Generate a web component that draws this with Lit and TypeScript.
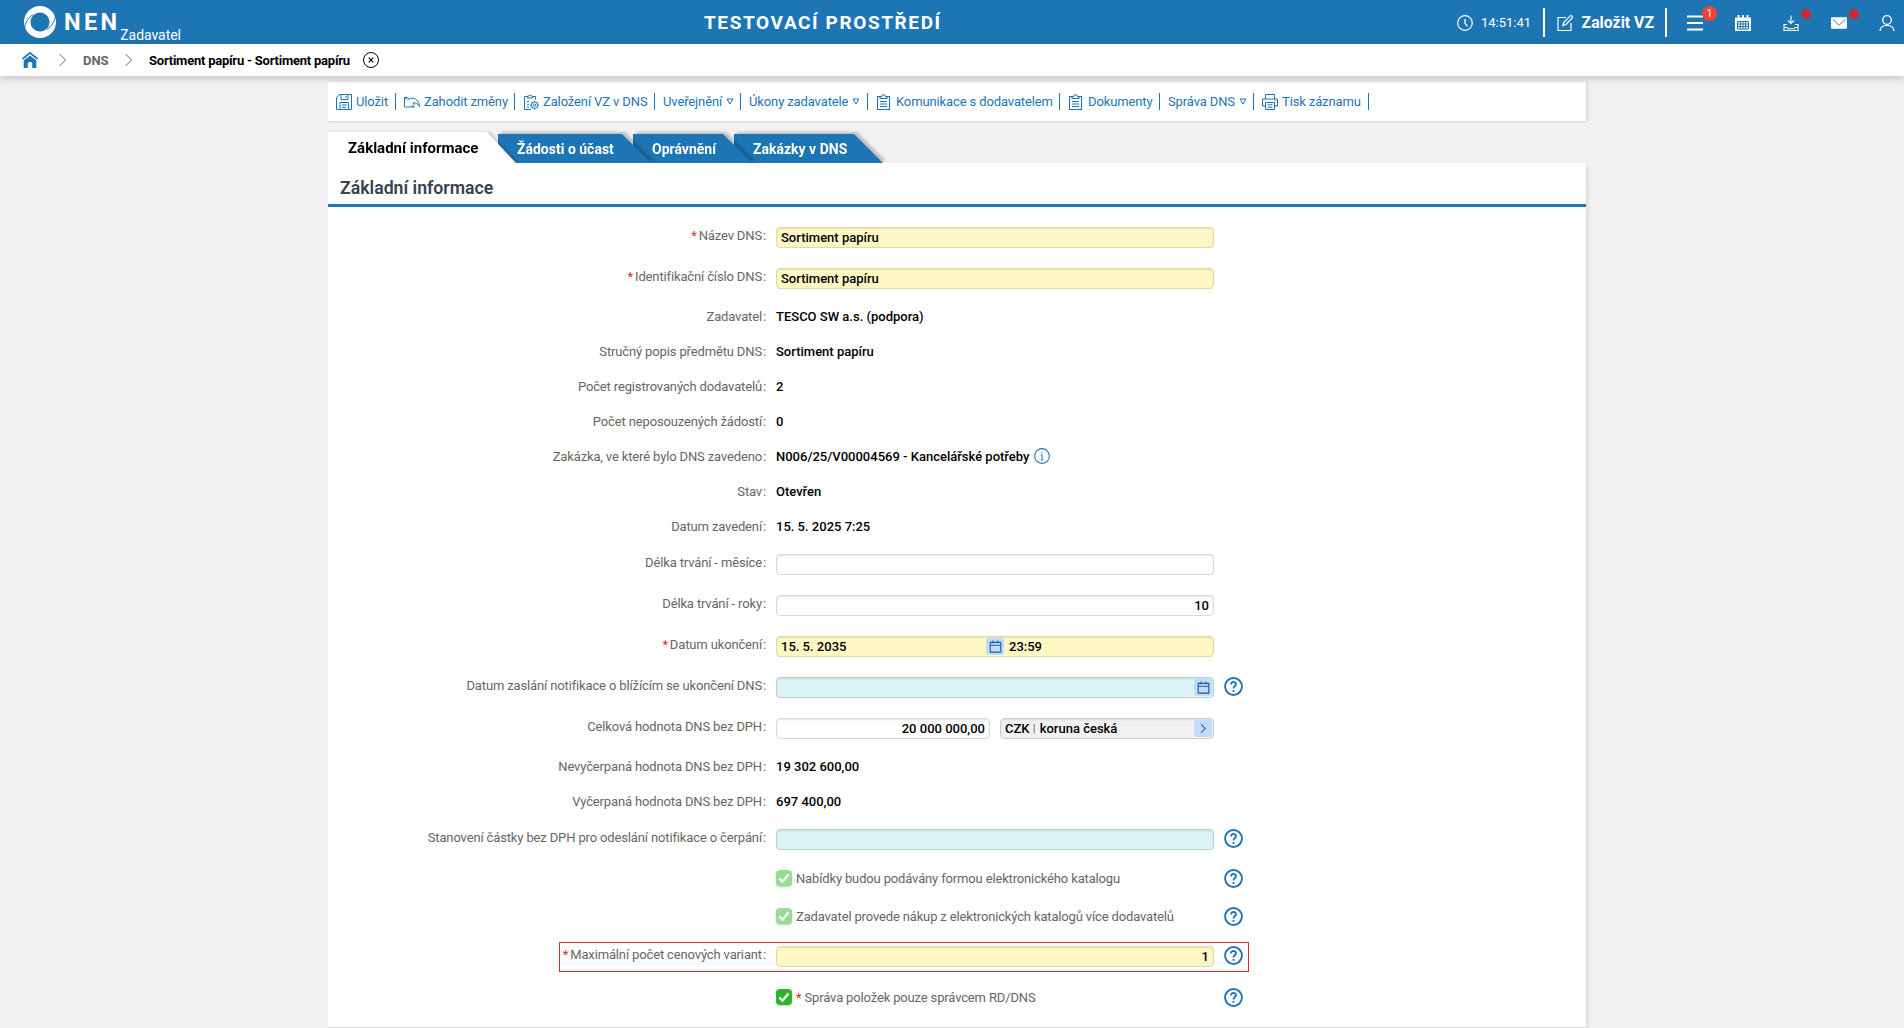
import { LitElement, html, css, svg, nothing } from "lit";
import { customElement, property } from "lit/decorators.js";

const icons: Record<string, any> = {
  save: svg`<path d="M3.500.500h12v15H.500v-12z"/><path d="M5 .500v5h7v-5M10 2v2M4 15.500V8.500h8.500v7M6 11h5M6 13.300h4"/>`,
  undo: svg`<path d="M5 4.500l-1.500-1H.500v9.500h10M10.500 13l-3-1.500M.500 3.500l3 2"/><path d="M4.500 5.500c4.500-3 10-1 11 7-2-3-4-4-6.500-3.700l1.500 2.200"/>`,
  folder: svg`<path d="M4.500 2.500h-3v13H8M9.500 2.500h3v3M4.500 4V2h1.200C6 .8 8 .8 8.300 2h1.200v2zM4 7.500h2M4 10.300h2M4 13h2"/><circle cx="11.500" cy="11.200" r="3.200"/><circle cx="11.500" cy="11.200" r="1.200"/><path d="M11.500 6.500V8M11.500 14.400v1.400M6.900 11.200h1.400M14.700 11.200h1.300M8.300 8l1 1M14.700 8l-1 1M8.300 14.400l1-1M14.700 14.400l-1-1"/>`,
  clipboard: svg`<path d="M4 2.500H1.500v13h12v-13H11M4 4.500v-2h1.500C6 .1 9 .1 9.500 2.500H11v2zM4 7.500h7M4 10h7M4 12.500h7" stroke-width="1.100"/>`,
  print: svg`<path d="M3.500 5V.500h9V5M3.500 12H.500V5h15v7h-3M3.500 8.500h9v7h-9zM5.500 10.800h5M5.500 13.200h5M12.500 6.800h1.200"/>`,
  clock: svg`<circle cx="8" cy="8" r="7.300" stroke-width="1.200"/><path d="M8 4v4.300l2.500 3" stroke-width="1.300"/>`,
  edit: svg`<path d="M9 2.500H1v13h13V8" stroke-width="1.200"/><path d="M6 10.500l.7-3L13.500.7c.8-.5 2.700 1 2 2L9 9.500z" stroke-width="1.200"/>`,
  menu: svg`<path d="M0 1.500h16M0 8h16M0 14.500h16" stroke-width="2"/>`,
  calendar: svg`<path d="M0 2.500h16V16H0z" fill="currentColor" stroke="none"/><path d="M3.500 0v3M8 0v3M12.500 0v3" stroke-width="2"/><path d="M2.500 6.500h11v7.500h-11zM2.500 9h11M2.500 11.500h11M5.300 6.500V14M8 6.500V14M10.700 6.500V14" stroke="#1d75b4"/>`,
  download: svg`<path d="M8 .500v7.700M5 5.500l3 3 3-3M4 9.500H1v6h14v-6h-3M1 12.500h3l1 1.300h6l1-1.300h3" stroke-width="1.100"/>`,
  mail: svg`<path d="M1 2h15a1 1 0 0 1 1 1v10a1 1 0 0 1-1 1H1a1 1 0 0 1-1-1V3a1 1 0 0 1 1-1z" fill="currentColor" stroke="none"/><path d="M2 4l6.500 6.500L15 4" stroke="#1d75b4"/>`,
  user: svg`<circle cx="8" cy="5" r="4.300" stroke-width="1.300"/><path d="M1 16c0-7.500 14-7.500 14 0" stroke-width="1.400"/>`,
  home: svg`<path d="M8 3.500l6.300 5V16h-4.100v-4.500c0-2-4.400-2-4.400 0V16H1.700V8.500z" fill="currentColor" stroke="none"/><path d="M.500 7L8 .9 15.500 7" stroke-width="1.700"/>`,
  chevron: svg`<path d="M4.500 2l6 6-6 6"/>`,
  close: svg`<circle cx="8" cy="8" r="7.500"/><path d="M5.700 5.700l4.600 4.600M10.300 5.700l-4.600 4.600" stroke-width="1.100"/>`,
  info: svg`<circle cx="8" cy="8" r="7.400" stroke-width="1.100"/><path d="M8 7v5M6.700 7H8M6.700 12h2.700M8 4v1.300"/>`,
  help: svg`<circle cx="8" cy="8" r="7.100" stroke-width="1.600"/><path d="M5.900 6.300c0-2.900 4.300-2.700 4.200-.1C10.100 7.700 8 7.700 8 9.700M8 10.900v1.500" stroke-width="1.600"/>`,
  date: svg`<path d="M1.500 3h13v12h-13zM1.500 6.500h13M5 .500v3.500M11 .500v3.500" stroke-width="1.400"/>`,
  check: svg`<path d="M3.300 8.500l3.200 3.200 6-7.200" stroke="#fff" stroke-width="2.200"/>`,
};

const icon = (name: string, cls = "") => html`
  <svg class="icon ${cls}" viewBox="0 0 ${name === "edit" || name === "mail" ? 17 : 16} 16" fill="none" stroke="currentColor">${icons[name]}</svg>
`;

const baseStyles = css`
  * {
    box-sizing: border-box;
  }

  .icon {
    display: block;
    width: 16px;
    height: 16px;
    flex: none;
    overflow: visible;
  }
`;

interface ToolItem {
  text: string;
  width: number;
  icon?: string;
  menu?: boolean;
}

const tools: ToolItem[] = [
  { text: "Uložit", width: 68, icon: "save" },
  { text: "Zahodit změny", width: 119, icon: "undo" },
  { text: "Založení VZ v DNS", width: 140, icon: "folder" },
  { text: "Uveřejnění", width: 86, menu: true },
  { text: "Úkony zadavatele", width: 127, menu: true },
  { text: "Komunikace s dodavatelem", width: 192, icon: "clipboard" },
  { text: "Dokumenty", width: 100, icon: "clipboard" },
  { text: "Správa DNS", width: 94, menu: true },
  { text: "Tisk záznamu", width: 115, icon: "print" },
];

const tabs = [
  { text: "Žádosti o účast", width: 153 },
  { text: "Oprávnění", width: 119 },
  { text: "Zakázky v DNS", width: 149 },
];

@customElement('nen-header')
export class NenHeader extends LitElement {
  static styles = [baseStyles, css`
    :host {
      display: grid;
      grid-template-columns: 704px auto 1fr;
      height: 44px;
      background: #1d75b4;
      color: #fff;
    }

    .brand {
      display: flex;
      padding: 6px 0 0 24px;
    }

    .logo {
      width: 32px;
      height: 32px;
    }

    .name {
      margin: 2px 0 0 8px;
      font-size: 23.500px;
      line-height: 28px;
      font-weight: 700;
      letter-spacing: 3.300px;
    }

    .role {
      margin-top: 19px;
      font-size: 14px;
      line-height: 20px;
      letter-spacing: -0.050px;
    }

    .env {
      align-self: center;
      font-size: 19px;
      font-weight: 700;
      letter-spacing: 1.600px;
      white-space: nowrap;
    }

    .right {
      display: flex;
      align-items: center;
      justify-content: flex-end;
      padding-right: 9px;
    }

    .time {
      margin: 0 13px 0 8px;
      width: 49px;
      font-size: 13px;
      white-space: nowrap;
    }

    .bar {
      width: 2px;
      height: 29px;
      background: #fff;
    }

    .create {
      display: flex;
      align-items: center;
      justify-content: space-between;
      width: 97px;
      margin: 0 11px 0 12px;
      font-size: 15.800px;
      font-weight: 700;
      white-space: nowrap;
    }

    .create .icon {
      width: 17px;
    }

    .tools {
      display: flex;
      gap: 32px;
      margin-left: 20px;
    }

    .tool {
      position: relative;
    }

    .badge {
      position: absolute;
      left: 15px;
      top: -9px;
      width: 15px;
      height: 15px;
      border-radius: 50%;
      background: #f44336;
      font-size: 10px;
      line-height: 15px;
      text-align: center;
    }

    .dot {
      position: absolute;
      left: 18px;
      top: -6px;
      width: 10px;
      height: 10px;
      border-radius: 50%;
      background: #c92a2a;
    }
  `];

  render() {
    return html`
      <div class="brand">
        <svg class="logo" viewBox="0 0 32 32" fill="none">
          <circle cx="16" cy="16" r="12.800" stroke="#fff" stroke-width="6.400"/>
          <path stroke="#1d75b4" stroke-width="1" d="M.5 22.500C1.500 16.500 3.500 12.500 9 8.500M31.500 9.500C30.500 15.500 28.500 19.500 23 23.500"/>
        </svg>
        <div class="name">NEN</div>
        <div class="role">Zadavatel</div>
      </div>
      <div class="env">TESTOVACÍ PROSTŘEDÍ</div>
      <div class="right">
        ${icon("clock")}
        <div class="time">14:51:41</div>
        <div class="bar"></div>
        <div class="create">${icon("edit")}<span>Založit VZ</span></div>
        <div class="bar"></div>
        <div class="tools">
          <div class="tool">${icon("menu")}<span class="badge">1</span></div>
          <div class="tool">${icon("calendar")}</div>
          <div class="tool">${icon("download")}<span class="dot"></span></div>
          <div class="tool">${icon("mail")}<span class="dot"></span></div>
          <div class="tool">${icon("user")}</div>
        </div>
      </div>
    `;
  }
}

@customElement('form-row')
export class FormRow extends LitElement {
  @property({ type: String }) public label: string = '';
  @property({ type: String }) public kind: string = 'text';
  @property({ type: Boolean }) public required: boolean = false;
  @property({ type: Boolean }) public help: boolean = false;

  static styles = [baseStyles, css`
    :host {
      display: grid;
      grid-template-columns: 438px 438px 30px;
      column-gap: 10px;
      height: 41px;
      padding-top: 10px;
      font-size: 13px;
      line-height: 17px;
      color: #666;
    }

    :host([kind="text"]) {
      height: 35px;
      padding-top: 9px;
    }

    :host([kind="check"]) {
      height: 38px;
      padding-top: 8px;
    }

    .label {
      text-align: right;
      white-space: nowrap;
      letter-spacing: -0.140px;
    }

    .colon {
      margin-left: 1px;
    }

    .req {
      color: #d32f2f;
      margin-right: 2px;
    }

    .help {
      width: 19px;
      height: 19px;
      color: #1d75b4;
    }

    :host([kind="check"]) .help {
      margin-top: 1px;
    }
  `];

  render() {
    return html`
      <div class="label">
        ${this.required ? html`<span class="req">*</span>` : nothing}${this.label}${this.label ? html`<span class="colon">:</span>` : nothing}
      </div>
      <slot></slot>
      ${this.help ? icon("help", "help") : nothing}
    `;
  }
}

@customElement('app-root')
export class AppRoot extends LitElement {
  static styles = [baseStyles, css`
    :host {
      display: block;
      height: 1028px;
      overflow: hidden;
      background: #f1f1f1;
      font-family: Roboto, "Liberation Sans", sans-serif;
      font-size: 13px;
      color: #000;
    }

    .crumbs {
      position: relative;
      z-index: 9;
      display: flex;
      align-items: center;
      height: 32px;
      padding-left: 22px;
      background: #fff;
      box-shadow: 0 2px 8px rgba(0, 0, 0, 0.2);
      font-weight: 700;
      white-space: nowrap;
    }

    .home {
      color: #1d75b4;
      margin-right: 17px;
    }

    .chevron {
      color: #666;
    }

    .crumb {
      width: 25px;
      margin: 0 13px 0 12px;
      color: #666;
    }

    .current {
      width: 201px;
      margin: 0 13px 0 12px;
      letter-spacing: -0.230px;
    }

    .page {
      width: 1258px;
      margin: 6px 0 0 328px;
    }

    .toolbar {
      display: flex;
      align-items: center;
      height: 40px;
      background: #fff;
      border-bottom: 1px solid #dcdcdc;
      box-shadow: 2px 0 3px rgba(0, 0, 0, 0.1);
      color: #1d75b4;
      letter-spacing: -0.120px;
    }

    .item {
      display: flex;
      align-items: center;
      gap: 4px;
      height: 17px;
      padding-left: 8px;
      border-right: 1px solid #1d75b4;
      white-space: nowrap;
    }

    .tabs {
      display: flex;
      align-items: flex-end;
      height: 31px;
      margin-top: 10px;
    }

    .tab {
      position: relative;
      margin-left: -18px;
      filter: drop-shadow(3px -2px 1px rgba(0, 0, 0, 0.2));
    }

    .tab.active {
      z-index: 4;
      width: 188px;
      margin-left: 0;
      filter: drop-shadow(3px 0 1px rgba(0, 0, 0, 0.15));
    }

    .shape {
      height: 29px;
      padding-left: 19px;
      background: #1d75b4;
      clip-path: polygon(0 0, calc(100% - 29px) 0, 100% 100%, 0 100%);
      color: #fff;
      font-size: 14px;
      line-height: 31px;
      font-weight: 700;
      white-space: nowrap;
    }

    .active .shape {
      height: 31px;
      padding-left: 20px;
      background: #fff;
      color: #000;
      font-size: 15px;
      line-height: 32px;
    }

    .panel {
      position: relative;
      z-index: 5;
      height: 865px;
      background: #fff;
      border-bottom: 1px solid #dcdcdc;
      box-shadow: 2px 3px 3px rgba(0, 0, 0, 0.1);
    }

    h2 {
      height: 44px;
      margin: 0 0 10px;
      padding-left: 12px;
      border-bottom: 3px solid #1d75b4;
      color: #37434f;
      font-size: 17.700px;
      line-height: 50px;
      font-weight: 600;
    }

    .value {
      color: #000;
      font-weight: 500;
      display: flex;
      gap: 5px;
      white-space: pre;
    }

    .value .icon {
      color: #1d75b4;
    }

    .field {
      display: flex;
      align-items: center;
      flex: 1;
      height: 21px;
      padding: 0 4px;
      border: 1px solid #d9d9d9;
      border-radius: 4px;
      background: #fff;
      box-shadow: inset 0 1px 2px rgba(0, 0, 0, 0.1);
      color: #000;
      font-weight: 500;
      white-space: pre;
    }

    .yellow {
      background: #fff8c4;
      border-color: #dfd8a8;
    }

    .cyan {
      background: #dcf4f6;
      border-color: #b5d3d5;
    }

    .gray {
      background: #f1f1f1;
      border-color: #cfcfcf;
    }

    .end {
      justify-content: flex-end;
    }

    .pair {
      display: flex;
      gap: 10px;
    }

    .half {
      width: 205px;
    }

    .button {
      display: flex;
      align-items: center;
      justify-content: center;
      width: 18px;
      height: 17px;
      border-radius: 3px;
      background: #c2dbf7;
      color: #1c5ba5;
    }

    .button .icon {
      width: 13px;
      height: 13px;
    }

    .button .chevron {
      color: #1c5ba5;
      width: 11px;
      height: 11px;
      stroke-width: 1.500px;
    }

    .right {
      margin-left: auto;
      margin-right: -3px;
    }

    .hour {
      margin-left: 5px;
    }

    .pipe {
      margin-right: 1px;
      font-weight: 400;
      font-size: 11px;
      color: #555;
    }

    .option {
      display: flex;
      align-items: center;
      height: 20px;
      gap: 4px;
      letter-spacing: -0.150px;
      white-space: nowrap;
    }

    .box {
      width: 16px;
      height: 16px;
      border-radius: 4px;
      background: #2fb52f;
      box-shadow: 0 1px 2px rgba(0, 160, 0, 0.35);
    }

    .off {
      background: #98dc98;
    }

    .req {
      color: #d32f2f;
    }

    .marked {
      width: 690px;
      height: 30px;
      margin: 6px 0 7px 231px;
      outline: 1px solid #e3262b;
      outline-offset: -1px;
      display: flex;
      justify-content: flex-end;
    }

    .marked form-row {
      flex: none;
      width: 926px;
      height: 30px;
      margin-right: -5px;
      padding-top: 4px;
    }
  `];

  renderField(value: string, cls = '') {
    return html`<div class="field ${cls}">${value}</div>`;
  }

  renderValue(label: string, value: string, info = false) {
    return html`
      <form-row kind="text" .label=${label}>
        <div class="value">${value}${info ? icon("info") : nothing}</div>
      </form-row>
    `;
  }

  renderOption(text: string, cls = '', required = false) {
    return html`
      <form-row kind="check" .help=${true}>
        <div class="option">
          <div class="box ${cls}">${icon("check")}</div>
          <span>${required ? html`<span class="req">*</span> ` : nothing}${text}</span>
        </div>
      </form-row>
    `;
  }

  render() {
    return html`
      <nen-header></nen-header>
      <nav class="crumbs">
        ${icon("home", "home")} ${icon("chevron", "chevron")}
        <span class="crumb">DNS</span>
        ${icon("chevron", "chevron")}
        <span class="current">Sortiment papíru - Sortiment papíru</span>
        ${icon("close")}
      </nav>
      <div class="page">
        <div class="toolbar">
          ${tools.map((t) => html`
            <div class="item" style="width: ${t.width}px">
              ${t.icon ? icon(t.icon) : nothing}<span>${t.text}</span>
              ${t.menu ? html`<svg width="8" height="7" viewBox="0 0 8 7" fill="none" stroke="currentColor"><path d="M1 1h6L4 6z"/></svg>` : nothing}
            </div>
          `)}
        </div>
        <div class="tabs">
          <div class="tab active"><div class="shape">Základní informace</div></div>
          ${tabs.map((t, i) => html`
            <div class="tab" style="width: ${t.width}px; z-index: ${3 - i}"><div class="shape">${t.text}</div></div>
          `)}
        </div>
        <div class="panel">
          <h2>Základní informace</h2>
          <form-row label="Název DNS" required>${this.renderField('Sortiment papíru', 'yellow')}</form-row>
          <form-row label="Identifikační číslo DNS" required>${this.renderField('Sortiment papíru', 'yellow')}</form-row>
          ${this.renderValue('Zadavatel', 'TESCO SW a.s. (podpora)')}
          ${this.renderValue('Stručný popis předmětu DNS', 'Sortiment papíru')}
          ${this.renderValue('Počet registrovaných dodavatelů', '2')}
          ${this.renderValue('Počet neposouzených žádostí', '0')}
          ${this.renderValue('Zakázka, ve které bylo DNS zavedeno', 'N006/25/V00004569 - Kancelářské potřeby', true)}
          ${this.renderValue('Stav', 'Otevřen')}
          ${this.renderValue('Datum zavedení', '15. 5. 2025 7:25')}
          <form-row label="Délka trvání - měsíce">${this.renderField('')}</form-row>
          <form-row label="Délka trvání - roky">${this.renderField('10', 'end')}</form-row>
          <form-row label="Datum ukončení" required>
            <div class="field yellow">
              <span class="half">15. 5. 2035</span><span class="button">${icon("date")}</span><span class="hour">23:59</span>
            </div>
          </form-row>
          <form-row label="Datum zaslání notifikace o blížícím se ukončení DNS" help>
            <div class="field cyan"><span class="button right">${icon("date")}</span></div>
          </form-row>
          <form-row label="Celková hodnota DNS bez DPH">
            <div class="pair">
              ${this.renderField('20 000 000,00', 'end')}
              <div class="field gray">CZK <span class="pipe">|</span> koruna česká<span class="button right">${icon("chevron", "chevron")}</span></div>
            </div>
          </form-row>
          ${this.renderValue('Nevyčerpaná hodnota DNS bez DPH', '19 302 600,00')}
          ${this.renderValue('Vyčerpaná hodnota DNS bez DPH', '697 400,00')}
          <form-row label="Stanovení částky bez DPH pro odeslání notifikace o čerpání" help>${this.renderField('', 'cyan')}</form-row>
          ${this.renderOption('Nabídky budou podávány formou elektronického katalogu', 'off')}
          ${this.renderOption('Zadavatel provede nákup z elektronických katalogů více dodavatelů', 'off')}
          <div class="marked">
            <form-row label="Maximální počet cenových variant" required help>${this.renderField('1', 'yellow end')}</form-row>
          </div>
          ${this.renderOption('Správa položek pouze správcem RD/DNS', '', true)}
        </div>
      </div>
    `;
  }
}
